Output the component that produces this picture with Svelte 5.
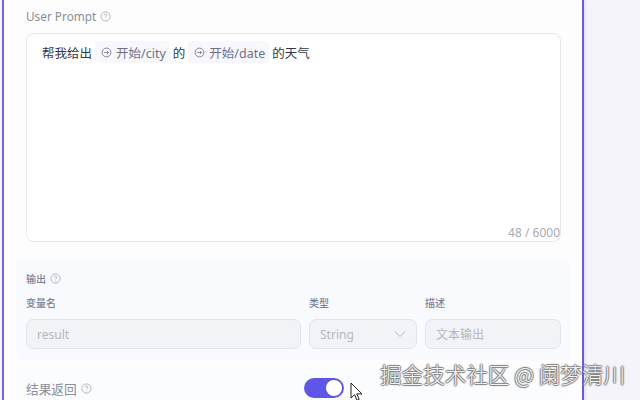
<script lang="ts">
const cjk = 'Prompt';
const columns = [
  { label: '变量名', value: 'result' },
  { label: '类型', value: 'String', select: true },
  { label: '描述', value: '文本输出' },
];
</script>

{#snippet help()}
  <svg class="help" viewBox="0 0 12 12" width="11" height="11" fill="none" stroke="currentColor" stroke-width="0.8">
    <circle cx="6" cy="6" r="5" />
    <path d="M4.5 4.8c0-.9.7-1.4 1.5-1.4s1.5.5 1.5 1.3c0 1.1-1.5 1.1-1.5 2.2" />
    <path d="M6 8.2v.8" />
  </svg>
{/snippet}

{#snippet ref(name)}
  <span class="ref">
    <svg viewBox="0 0 12 12" width="11" height="11" fill="none" stroke="currentColor" stroke-width="0.9">
      <circle cx="6" cy="6" r="4.8" />
      <path d="M3.5 6h4.8M6.5 4.2 8.3 6 6.5 7.8" />
    </svg>
    开始/{name}
  </span>
{/snippet}

<div class="page">
  <div class="node">
    <section class="prompt">
      <div class="label">User {cjk} {@render help()}</div>
      <div class="editor">
        <div class="line">
          <span>帮我给出</span>
          {@render ref('city')}
          <span>的</span>
          {@render ref('date')}
          <span>的天气</span>
        </div>
        <div class="count">48 / 6000</div>
      </div>
    </section>

    <section class="output">
      <div class="small-label">输出 {@render help()}</div>
      <div class="fields">
        {#each columns as col}
          <div class="field">
            <div class="small-label">{col.label}</div>
            <div class="input">
              <span>{col.value}</span>
              {#if col.select}
                <svg viewBox="0 0 12 8" width="12" height="8" fill="none" stroke="#b4b8c4" stroke-width="1">
                  <path d="M1 1.5 6 6.5 11 1.5" />
                </svg>
              {/if}
            </div>
          </div>
        {/each}
      </div>
    </section>

    <section class="result">
      <div class="label">结果返回 {@render help()}</div>
      <div class="switch"><div class="knob"></div></div>
    </section>
  </div>

  <svg class="cursor" viewBox="0 0 14 20" width="14" height="20">
    <path d="M1 1v15l3.6-3.3 2.4 5.6 2.2-1-2.4-5.4H12z" fill="#fff" stroke="#222" stroke-width="1" />
  </svg>
  <div class="watermark">掘金技术社区 @ 阑梦清川</div>
</div>

<style>
  :global(body) {
    margin: 0;
  }

  .page {
    position: relative;
    width: 640px;
    height: 400px;
    overflow: hidden;
    padding-left: 2px;
    box-sizing: border-box;
    background: #f5f4fb;
    font-family: "Noto Sans", "Noto Sans CJK SC", sans-serif;
  }

  .node {
    box-sizing: border-box;
    width: 582px;
    height: 400px;
    padding: 0 11px 0 12px;
    background: #fdfdfe;
    border-left: 2px solid #7464e4;
    border-right: 2px solid #6a5ae0;
    box-shadow: 2px 0 2px #e6e4f6;
  }

  .prompt {
    padding: 8px 10px 0 10px;
  }

  .label {
    display: flex;
    align-items: center;
    gap: 4px;
    height: 16px;
    font-size: 11.8px;
    color: #8a8d9c;
  }

  .help {
    color: #9a9daa;
    flex: none;
  }

  .editor {
    position: relative;
    box-sizing: border-box;
    height: 209px;
    margin-top: 9px;
    padding: 7px 15px;
    background: #fff;
    border: 1px solid #e8e9f0;
    border-radius: 8px;
  }

  .line {
    display: flex;
    align-items: center;
    gap: 3px;
    height: 22px;
    font-size: 12.5px;
    color: #33364a;
  }

  .ref {
    display: flex;
    align-items: center;
    gap: 4px;
    height: 22px;
    padding: 0 4px 0 6px;
    border-radius: 4px;
    background: #f7f7fc;
    color: #6e7186;
  }

  .count {
    position: absolute;
    right: 0;
    bottom: 0;
    font-size: 12px;
    color: #a8aab6;
  }

  .output {
    box-sizing: border-box;
    height: 100px;
    margin-top: 18px;
    padding: 11px 10px 0 10px;
    background: #f9fafd;
    border-radius: 6px;
  }

  .small-label {
    display: flex;
    align-items: center;
    gap: 4px;
    height: 14px;
    font-size: 10px;
    font-weight: 500;
    color: #7d8092;
  }

  .fields {
    display: grid;
    grid-template-columns: 275px 108px 136px;
    gap: 8px;
    margin-top: 10px;
  }

  .field .small-label {
    margin-bottom: 10px;
  }

  .input {
    box-sizing: border-box;
    display: flex;
    align-items: center;
    justify-content: space-between;
    height: 30px;
    padding: 0 10px;
    background: #f2f3f7;
    border: 1px solid #e3e4ec;
    border-radius: 7px;
    font-size: 12px;
    color: #b5b7c2;
  }

  .result {
    display: flex;
    align-items: center;
    box-sizing: border-box;
    height: 40px;
    margin-top: 8px;
    padding: 0 0 0 10px;
    background: #fbfcfe;
    border-radius: 6px;
  }

  .result .label {
    width: 278px;
    font-size: 12.7px;
  }

  .switch {
    display: flex;
    justify-content: flex-end;
    align-items: center;
    box-sizing: border-box;
    width: 40px;
    height: 20px;
    padding: 2px;
    border-radius: 10px;
    background: #5f55e6;
  }

  .knob {
    width: 16px;
    height: 16px;
    border-radius: 50%;
    background: #fff;
  }

  .cursor {
    position: absolute;
    left: 350px;
    top: 382px;
  }

  .watermark {
    position: absolute;
    left: 380px;
    top: 361px;
    font-size: 21.6px;
    line-height: 26px;
    white-space: nowrap;
    font-family: "Noto Sans CJK SC", sans-serif;
    font-weight: 300;
    color: #f2f2f2;
    text-shadow: 1px 0 1px #777, -1px 0 1px #777, 0 1px 1px #777, 0 -1px 1px #777;
  }
</style>
